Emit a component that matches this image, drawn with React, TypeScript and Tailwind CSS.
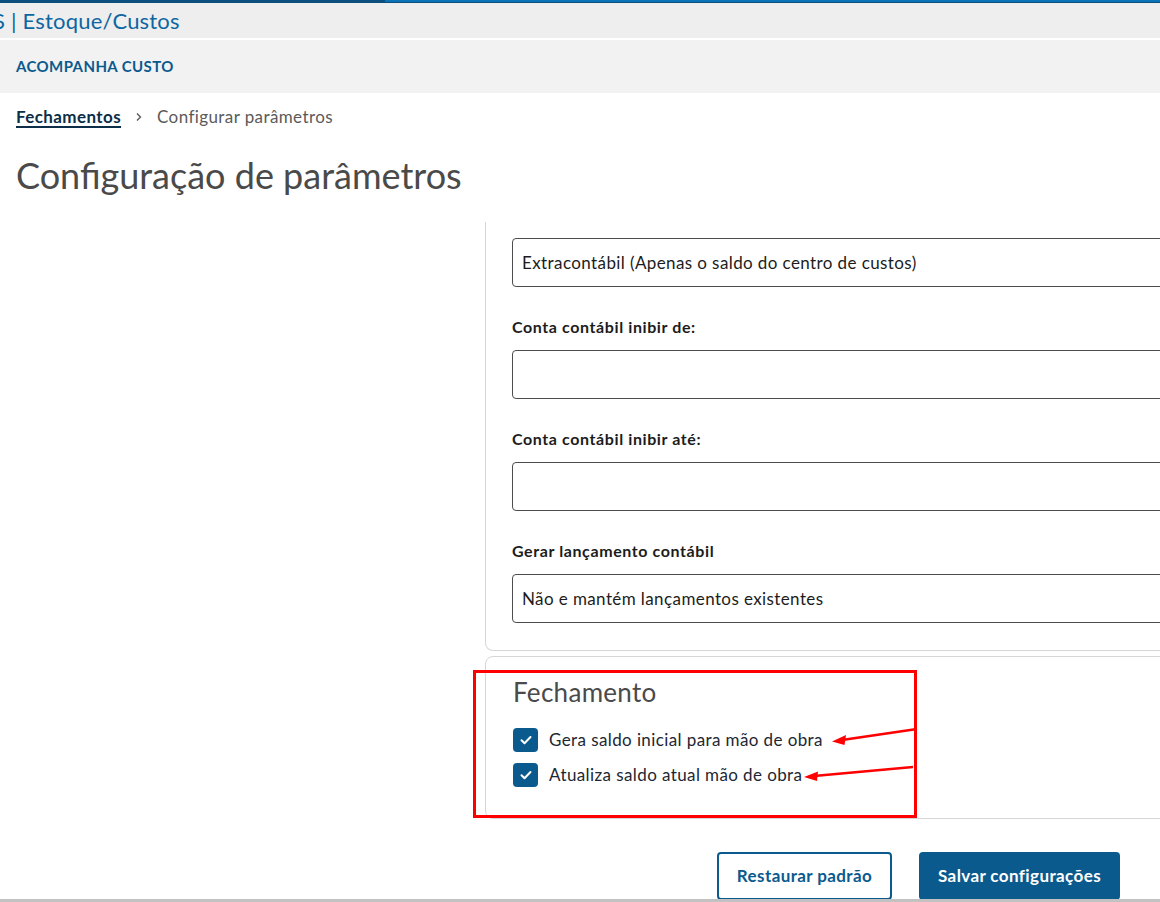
import React from 'react';

const font = { fontFamily: 'Lato, "Noto Sans", sans-serif' };

function Field({ label, value }: { label?: string; value?: string }) {
  return (
    <div>
      {label && (
        <div className="mt-[30px] mb-[13px] h-[20px] text-[16px] leading-[20px] font-bold tracking-[0.6px] text-[#1c1c1c]">
          {label}
        </div>
      )}
      <div className="flex h-[49px] w-[700px] items-center rounded-[4px] border border-[#4d4d4d] bg-white px-[9px] text-[17px] tracking-[0.4px] text-[#1c1c1c]">
        {value}
      </div>
    </div>
  );
}

function Check({ label }: { label: string }) {
  return (
    <label className="flex h-[24px] items-center gap-[11px]">
      <span className="flex h-[24px] w-[25px] items-center justify-center rounded-[4px] bg-[#0b5a8e]">
        <svg width="14" height="14" viewBox="0 0 14 14" fill="none">
          <path d="M2.5 7.2l3 3 6-6.2" stroke="#fff" strokeWidth="2" strokeLinecap="round" strokeLinejoin="round" />
        </svg>
      </span>
      <span className="text-[17px] tracking-[0.4px] text-[#1d2733]">{label}</span>
    </label>
  );
}

export default function App() {
  return (
    <div className="relative h-[902px] w-[1160px] overflow-hidden bg-white" style={font}>
      {/* Top bar */}
      <div className="flex">
        <div className="h-[3px] w-[385px] bg-[#0b4f7e]" />
        <div className="h-[3px] flex-1 border-b border-[#0b4f7e] bg-[#0a73b7]" />
      </div>
      <div className="flex h-[35px] items-center bg-[#eeeeee]">
        <span className="-ml-[7px] text-[22px] leading-none tracking-[0.2px] text-[#0d66a2]">S | Estoque/Custos</span>
      </div>
      <div className="h-[2px] bg-white" />
      <div className="flex h-[53px] items-center bg-[#f2f2f2] px-[16px]">
        <span className="text-[15px] font-bold tracking-[0.4px] text-[#0b5a8e]">ACOMPANHA CUSTO</span>
      </div>

      {/* Breadcrumb */}
      <div className="mt-[14px] flex h-[20px] items-center px-[16px] text-[17px] tracking-[0.4px]">
        <span className="font-bold text-[#0c2e48] underline decoration-[1.5px] underline-offset-[3px]">Fechamentos</span>
        <svg className="mx-[13px]" width="10" height="10" viewBox="0 0 10 10" fill="none">
          <path d="M3 1.5l3.5 3.5L3 8.5" stroke="#555" strokeWidth="1.3" />
        </svg>
        <span className="text-[#5a5a5a]">Configurar parâmetros</span>
      </div>

      {/* Title */}
      <h1 className="mt-[26px] px-[16px] text-[36px] leading-[44px] text-[#4a4a4a]">Configuração de parâmetros</h1>

      {/* Content */}
      <div className="mt-[25px] flex">
        <div className="w-[485px] shrink-0" />
        <div className="w-[760px] shrink-0">
          <div className="rounded-b-[8px] border-x border-b border-[#d6d6d6] pt-[16px] pb-[27px] pl-[26px]">
            <Field value="Extracontábil (Apenas o saldo do centro de custos)" />
            <Field label="Conta contábil inibir de:" />
            <Field label="Conta contábil inibir até:" />
            <Field label="Gerar lançamento contábil" value="Não e mantém lançamentos existentes" />
          </div>
          <div className="mt-[5px] rounded-[8px] border border-[#d6d6d6] pt-[19px] pb-[31px] pl-[27px]">
            <h2 className="text-[26px] leading-[32px] tracking-[0.3px] text-[#4a4a4a]">Fechamento</h2>
            <div className="mt-[20px] flex flex-col gap-[11px]">
              <Check label="Gera saldo inicial para mão de obra" />
              <Check label="Atualiza saldo atual mão de obra" />
            </div>
          </div>
          <div className="mt-[33px] flex w-[635px] justify-end gap-[27px]">
            <button className="h-[48px] w-[175px] rounded-[4px] border-2 border-[#0b5a8e] bg-white text-[17px] font-bold tracking-[0.4px] text-[#0b5a8e]">
              Restaurar padrão
            </button>
            <button className="h-[48px] w-[201px] rounded-[4px] bg-[#0b5a8e] text-[17px] font-bold tracking-[0.4px] text-white">
              Salvar configurações
            </button>
          </div>
        </div>
      </div>

      {/* Bottom scrollbar edge */}
      <div className="absolute bottom-0 left-0 h-[3px] w-full bg-[#c2c2c2]" />

      {/* Annotation overlay */}
      <div className="absolute left-[473px] top-[670px] h-[148px] w-[444px] border-[3px] border-[#ff0000]" />
      <svg className="absolute left-0 top-0" width="1160" height="902" viewBox="0 0 1160 902" fill="none">
        <line x1="917" y1="729" x2="842" y2="740" stroke="#ff0000" strokeWidth="2.5" />
        <path d="M832 741.5l14-6.5-1.5 10z" fill="#ff0000" />
        <line x1="913" y1="767" x2="814" y2="776" stroke="#ff0000" strokeWidth="2.5" />
        <path d="M804 777l14-5.5-1 9.5z" fill="#ff0000" />
      </svg>
    </div>
  );
}
